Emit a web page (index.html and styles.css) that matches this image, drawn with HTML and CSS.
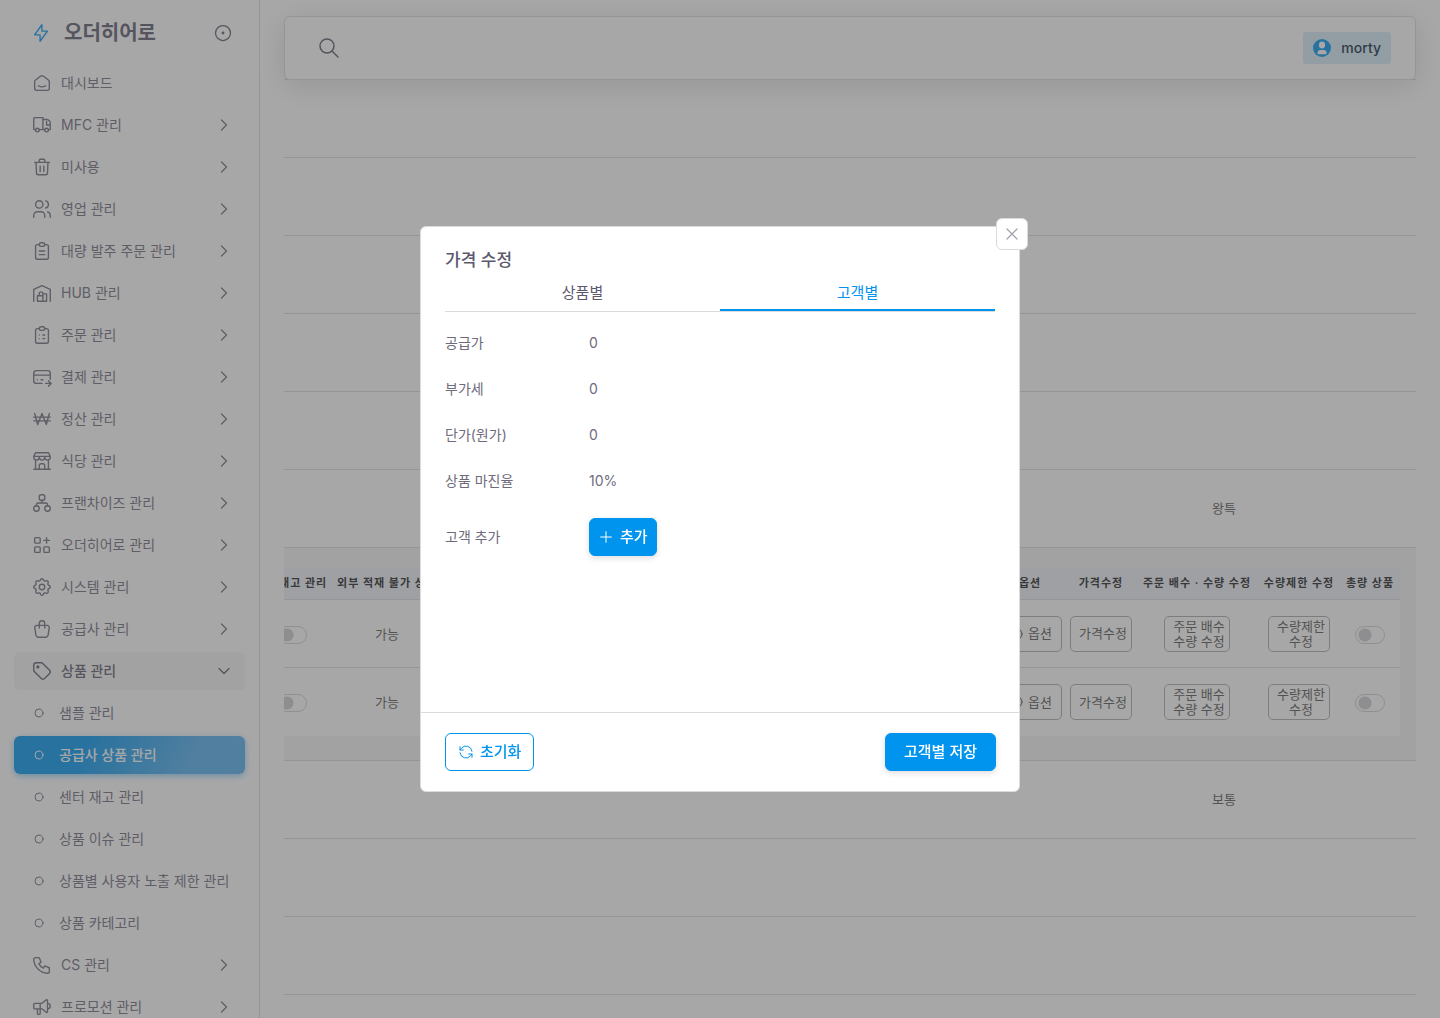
FILE: index.html
```html
<!DOCTYPE html>
<html lang="ko">
<head>
<meta charset="utf-8">
<meta name="viewport" content="width=device-width, initial-scale=1">
<title>오더히어로</title>
<link rel="stylesheet" href="styles.css">
</head>
<body>
<svg class="sprite" aria-hidden="true">
  <symbol id="chevron" viewBox="0 0 24 24"><path d="M9 6l6 6l-6 6"/></symbol>
  <symbol id="bullet" viewBox="0 0 10 10"><circle cx="5" cy="5" r="4"/></symbol>
</svg>
<div class="app">
  <aside class="sidebar">
    <div class="brand">
      <a class="brand-link" href="#">
        <svg class="icon brand-icon" viewBox="0 0 24 24"><path d="M13 3v7h6l-8 11v-7H5z"/></svg>
        <span class="brand-name">오더히어로</span>
      </a>
      <button class="plain" type="button" aria-label="메뉴 고정"><svg class="icon pin" viewBox="0 0 24 24"><circle cx="12" cy="12" r="9"/><circle cx="12" cy="12" r="1" class="fill"/></svg></button>
    </div>
    <nav>
      <ul class="nav">
        <li><a href="#"><svg class="icon" viewBox="0 0 24 24"><path d="M19 8.700l-5.300-4.100a2.700 2.700 0 0 0-3.400 0L5 8.700a2.600 2.600 0 0 0-1 2.100v7a2.200 2.200 0 0 0 2.200 2.200h11.600a2.200 2.200 0 0 0 2.200-2.200v-7c0-.800-.400-1.600-1-2.100M16 15c-2.200 1.300-5.800 1.300-8 0"/></svg><span>대시보드</span></a></li>
        <li><a href="#"><svg class="icon" viewBox="0 0 24 24"><circle cx="7" cy="17.500" r="2"/><circle cx="17" cy="17.500" r="2"/><path d="M5 17H3V5q0-1 1-1H13v13H9M13 6h4a4.500 4.500 0 0 1 4 4.500V17H19M13 17h2M21 12h-4V8"/></svg><span>MFC 관리</span><svg class="icon chev"><use href="#chevron"/></svg></a></li>
        <li><a href="#"><svg class="icon" viewBox="0 0 24 24"><path d="M4 7h16M10 11v6M14 11v6M5.500 7l.500 11.500a2 2 0 0 0 2 2h8a2 2 0 0 0 2-2L18.500 7M9 7V4.500a1 1 0 0 1 1-1h4a1 1 0 0 1 1 1V7"/></svg><span>미사용</span><svg class="icon chev"><use href="#chevron"/></svg></a></li>
        <li><a href="#"><svg class="icon" viewBox="0 0 24 24"><circle cx="9" cy="7" r="4"/><path d="M3 21v-2a4 4 0 0 1 4-4h4a4 4 0 0 1 4 4v2M16 3.130a4 4 0 0 1 0 7.750M21 21v-2a4 4 0 0 0-3-3.850"/></svg><span>영업 관리</span><svg class="icon chev"><use href="#chevron"/></svg></a></li>
        <li><a href="#"><svg class="icon" viewBox="0 0 24 24"><path d="M9 5H7a2 2 0 0 0-2 2v12a2 2 0 0 0 2 2h10a2 2 0 0 0 2-2V7a2 2 0 0 0-2-2h-2M9 12h6M9 16h6"/><rect x="9" y="3" width="6" height="4" rx="2"/></svg><span>대량 발주 주문 관리</span><svg class="icon chev"><use href="#chevron"/></svg></a></li>
        <li><a href="#"><svg class="icon" viewBox="0 0 24 24"><path d="M3 21V8l9-4l9 4v13M13 13h4v8H7v-6h6M13 21v-9a1 1 0 0 0-1-1h-2a1 1 0 0 0-1 1v3"/></svg><span>HUB 관리</span><svg class="icon chev"><use href="#chevron"/></svg></a></li>
        <li><a href="#"><svg class="icon" viewBox="0 0 24 24"><path d="M9 5H7a2 2 0 0 0-2 2v12a2 2 0 0 0 2 2h10a2 2 0 0 0 2-2V7a2 2 0 0 0-2-2h-2M9 12h.010M13 12h2M9 16h.010M13 16h2"/><rect x="9" y="3" width="6" height="4" rx="2"/></svg><span>주문 관리</span><svg class="icon chev"><use href="#chevron"/></svg></a></li>
        <li><a href="#"><svg class="icon" viewBox="0 0 24 24"><path d="M12 19H6a3 3 0 0 1-3-3V8a3 3 0 0 1 3-3h12a3 3 0 0 1 3 3v6.500M3 10h18M16 19h6M19 16l3 3l-3 3M7 15h.010M11 15h2"/></svg><span>결제 관리</span><svg class="icon chev"><use href="#chevron"/></svg></a></li>
        <li><a href="#"><svg class="icon" viewBox="0 0 24 24"><path d="M4 6l3.250 12L12 6l4.750 12L20 6M3 10h18M3 14h18"/></svg><span>정산 관리</span><svg class="icon chev"><use href="#chevron"/></svg></a></li>
        <li><a href="#"><svg class="icon" viewBox="0 0 24 24"><path d="M3 21h18M3 7v1a3 3 0 0 0 6 0V7m0 1a3 3 0 0 0 6 0V7m0 1a3 3 0 0 0 6 0V7H3l2-4h14l2 4M5 21V10.850M19 21V10.850M9 21v-4a2 2 0 0 1 2-2h2a2 2 0 0 1 2 2v4"/></svg><span>식당 관리</span><svg class="icon chev"><use href="#chevron"/></svg></a></li>
        <li><a href="#"><svg class="icon" viewBox="0 0 24 24"><rect x="9" y="3" width="6" height="6" rx="2"/><circle cx="6" cy="18" r="3"/><circle cx="18" cy="18" r="3"/><path d="M6 15v-1a2 2 0 0 1 2-2h8a2 2 0 0 1 2 2v1M12 9v3"/></svg><span>프랜차이즈 관리</span><svg class="icon chev"><use href="#chevron"/></svg></a></li>
        <li><a href="#"><svg class="icon" viewBox="0 0 24 24"><rect x="4" y="4" width="6" height="6" rx="1"/><rect x="4" y="14" width="6" height="6" rx="1"/><rect x="14" y="14" width="6" height="6" rx="1"/><path d="M14 7h6M17 4v6"/></svg><span>오더히어로 관리</span><svg class="icon chev"><use href="#chevron"/></svg></a></li>
        <li><a href="#"><svg class="icon" viewBox="0 0 24 24"><path d="M10.325 4.317c.426-1.756 2.924-1.756 3.350 0a1.724 1.724 0 0 0 2.573 1.066c1.543-.940 3.310.826 2.370 2.370a1.724 1.724 0 0 0 1.065 2.572c1.756.426 1.756 2.924 0 3.350a1.724 1.724 0 0 0-1.066 2.573c.940 1.543-.826 3.310-2.370 2.370a1.724 1.724 0 0 0-2.572 1.065c-.426 1.756-2.924 1.756-3.350 0a1.724 1.724 0 0 0-2.573-1.066c-1.543.940-3.310-.826-2.370-2.370a1.724 1.724 0 0 0-1.065-2.572c-1.756-.426-1.756-2.924 0-3.350a1.724 1.724 0 0 0 1.066-2.573c-.940-1.543.826-3.310 2.370-2.370c1 .608 2.296.070 2.572-1.065z"/><circle cx="12" cy="12" r="3"/></svg><span>시스템 관리</span><svg class="icon chev"><use href="#chevron"/></svg></a></li>
        <li><a href="#"><svg class="icon" viewBox="0 0 24 24"><path d="M6.300 8h11.400a2.300 2.300 0 0 1 2.200 2.600l-1.200 7.700a3 3 0 0 1-3 2.700H8.300a3 3 0 0 1-3-2.700l-1.200-7.700A2.300 2.300 0 0 1 6.300 8M9 11V6a3 3 0 0 1 6 0V11"/></svg><span>공급사 관리</span><svg class="icon chev"><use href="#chevron"/></svg></a></li>
        <li><a class="open" href="#"><svg class="icon" viewBox="0 0 24 24"><circle cx="7.500" cy="7.500" r="1" class="fill"/><path d="M3 6v5.172a2 2 0 0 0 .586 1.414l7.710 7.710a2.410 2.410 0 0 0 3.408 0l5.592-5.592a2.410 2.410 0 0 0 0-3.408l-7.710-7.710A2 2 0 0 0 11.172 3H6a3 3 0 0 0-3 3z"/></svg><span>상품 관리</span><svg class="icon chev down"><use href="#chevron"/></svg></a>
          <ul class="nav sub">
            <li><a href="#"><svg class="icon dot"><use href="#bullet"/></svg><span>샘플 관리</span></a></li>
            <li><a class="active" href="#" aria-current="page"><svg class="icon dot"><use href="#bullet"/></svg><span>공급사 상품 관리</span></a></li>
            <li><a href="#"><svg class="icon dot"><use href="#bullet"/></svg><span>센터 재고 관리</span></a></li>
            <li><a href="#"><svg class="icon dot"><use href="#bullet"/></svg><span>상품 이슈 관리</span></a></li>
            <li><a href="#"><svg class="icon dot"><use href="#bullet"/></svg><span>상품별 사용자 노출 제한 관리</span></a></li>
            <li><a href="#"><svg class="icon dot"><use href="#bullet"/></svg><span>상품 카테고리</span></a></li>
          </ul>
        </li>
        <li><a href="#"><svg class="icon" viewBox="0 0 24 24"><path d="M5 4h4l2 5l-2.500 1.500a11 11 0 0 0 5 5L15 13l5 2v4a2 2 0 0 1-2 2A16 16 0 0 1 3 6a2 2 0 0 1 2-2"/></svg><span>CS 관리</span><svg class="icon chev"><use href="#chevron"/></svg></a></li>
        <li><a href="#"><svg class="icon" viewBox="0 0 24 24"><path d="M18 8a3 3 0 0 1 0 6M10 8v11a1 1 0 0 1-1 1H8a1 1 0 0 1-1-1v-5M12 8l4.524-3.770A.900.900 0 0 1 18 4.922v12.156a.900.900 0 0 1-1.476.692L12 14H4a1 1 0 0 1-1-1V9a1 1 0 0 1 1-1h8"/></svg><span>프로모션 관리</span><svg class="icon chev"><use href="#chevron"/></svg></a></li>
      </ul>
    </nav>
  </aside>

  <main class="main">
    <header class="topbar">
      <button class="plain" type="button" aria-label="검색"><svg class="icon search" viewBox="0 0 24 24"><circle cx="10" cy="10" r="7"/><path d="M15 15l6 6"/></svg></button>
      <button class="user" type="button">
        <svg class="avatar" viewBox="0 0 18 18" aria-hidden="true"><circle class="disc" cx="9" cy="9" r="9"/><rect x="6" y="2.500" width="6" height="7" rx="3"/><path d="M4.500 15.300V14a3 3 0 0 1 3-3h3a3 3 0 0 1 3 3v1.300z"/></svg>
        <span>morty</span>
      </button>
    </header>
    <div class="grid-scroll">
      <table class="grid">
        <colgroup><col><col class="col-size"></colgroup>
        <tbody>
          <tr><td></td><td></td></tr>
          <tr><td></td><td></td></tr>
          <tr><td></td><td></td></tr>
          <tr><td></td><td></td></tr>
          <tr><td></td><td></td></tr>
          <tr><td></td><td>왕특</td></tr>
          <tr class="detail"><td colspan="2">
            <table class="options">
              <colgroup><col class="w-stock"><col class="w-load"><col><col class="w-option"><col class="w-price"><col class="w-order"><col class="w-limit"><col class="w-total"></colgroup>
              <thead>
                <tr><th>센터재고 관리</th><th>외부 적재 불가 상품</th><th></th><th>옵션</th><th>가격수정</th><th>주문 배수 · 수량 수정</th><th>수량제한 수정</th><th>총량 상품</th></tr>
              </thead>
              <tbody>
                <tr>
                  <td><input class="switch" type="checkbox" role="switch" aria-label="재고 관리"></td>
                  <td>가능</td><td></td>
                  <td><button class="cell-btn with-icon" type="button"><svg class="icon" viewBox="0 0 24 24"><circle cx="12" cy="12" r="9"/></svg>옵션</button></td>
                  <td><button class="cell-btn" type="button">가격수정</button></td>
                  <td><button class="cell-btn" type="button">주문 배수<br>수량 수정</button></td>
                  <td><button class="cell-btn" type="button">수량제한<br>수정</button></td>
                  <td><input class="switch" type="checkbox" role="switch" aria-label="총량 상품"></td>
                </tr>
                <tr>
                  <td><input class="switch" type="checkbox" role="switch" aria-label="재고 관리"></td>
                  <td>가능</td><td></td>
                  <td><button class="cell-btn with-icon" type="button"><svg class="icon" viewBox="0 0 24 24"><circle cx="12" cy="12" r="9"/></svg>옵션</button></td>
                  <td><button class="cell-btn" type="button">가격수정</button></td>
                  <td><button class="cell-btn" type="button">주문 배수<br>수량 수정</button></td>
                  <td><button class="cell-btn" type="button">수량제한<br>수정</button></td>
                  <td><input class="switch" type="checkbox" role="switch" aria-label="총량 상품"></td>
                </tr>
              </tbody>
            </table>
          </td></tr>
          <tr><td></td><td>보통</td></tr>
          <tr><td></td><td></td></tr>
          <tr><td></td><td></td></tr>
          <tr><td></td><td></td></tr>
        </tbody>
      </table>
    </div>
  </main>
</div>

<div class="backdrop">
  <section class="modal" role="dialog" aria-modal="true" aria-labelledby="modal-title">
    <button class="close" type="button" aria-label="닫기"><svg class="icon" viewBox="0 0 24 24"><path d="M18 6L6 18M6 6l12 12"/></svg></button>
    <div class="modal-body">
      <h2 id="modal-title">가격 수정</h2>
      <div class="tabs" role="tablist">
        <button type="button" role="tab" aria-selected="false">상품별</button>
        <button type="button" role="tab" aria-selected="true">고객별</button>
      </div>
      <dl class="fields">
        <dt>공급가</dt><dd>0</dd>
        <dt>부가세</dt><dd>0</dd>
        <dt>단가(원가)</dt><dd>0</dd>
        <dt>상품 마진율</dt><dd>10%</dd>
        <dt>고객 추가</dt><dd><button class="btn primary add" type="button"><svg class="icon" viewBox="0 0 24 24"><path d="M12 4v16M4 12h16"/></svg>추가</button></dd>
      </dl>
    </div>
    <footer class="modal-footer">
      <button class="btn outline" type="button"><svg class="icon" viewBox="0 0 24 24"><path d="M21 11A9 9 0 0 0 5 6.500L3 9M3 4v5h5M3 13A9 9 0 0 0 19 17.500l2-2.500M21 20v-5h-5"/></svg>초기화</button>
      <button class="btn primary" type="button">고객별 저장</button>
    </footer>
  </section>
</div>
</body>
</html>
```

FILE: styles.css
```css
:root {
  --primary: #0094ef;
  --text: #6f6b7d;
  --heading: #5d596c;
  --line: #dbdbdb;
}

* { box-sizing: border-box; }

body {
  margin: 0;
  background: #fff;
  color: var(--text);
  font: 14px/22px Inter, "Noto Sans CJK KR", sans-serif;
}

button { font: inherit; color: inherit; cursor: pointer; }
ul, dl, dd, h2 { margin: 0; padding: 0; }
ul { list-style: none; }
a { color: inherit; text-decoration: none; }

.sprite { display: none; }

.icon {
  flex: none;
  width: 22px;
  height: 22px;
  fill: none;
  stroke: currentColor;
  stroke-width: 1.5;
  stroke-linecap: round;
  stroke-linejoin: round;
}
.icon .fill { fill: currentColor; }

.plain { display: flex; padding: 0; border: 0; background: none; }

.app { display: flex; height: 100vh; overflow: hidden; }

/* Sidebar */
.sidebar {
  flex: none;
  width: 260px;
  border-right: 1px solid var(--line);
  overflow: hidden;
}
.brand {
  display: flex;
  align-items: center;
  justify-content: space-between;
  height: 64px;
  padding: 1px 26px 0 30px;
  color: var(--heading);
}
.brand-link { display: flex; align-items: center; gap: 12px; }
.brand-icon { color: var(--primary); }
.brand-name { font-size: 20px; font-weight: 700; }
.pin { width: 20px; height: 20px; }

.nav { display: flex; flex-direction: column; gap: 4px; }
nav > .nav { padding: 0 14px; }
.nav a {
  display: flex;
  align-items: center;
  gap: 8px;
  height: 38px;
  padding: 0 11px 0 17px;
  border-radius: 6px;
  white-space: nowrap;
}
.nav .chev { width: 20px; height: 20px; margin-left: auto; }
.nav .down { transform: rotate(90deg); }
.nav .open { background: #f5f5f5; color: var(--heading); font-weight: 500; }
.sub { padding-top: 4px; }
.sub a { gap: 15px; padding-left: 20px; }
.nav .dot { width: 10px; height: 10px; stroke-width: 1; }
.nav .active {
  background: linear-gradient(118deg, var(--primary) 30%, #50aeee 75%);
  box-shadow: 0 2px 6px rgba(0, 148, 239, .48);
  color: #fff;
  font-weight: 500;
}

/* Main column */
.main {
  flex: 1;
  min-width: 0;
  padding: 16px 24px 0;
}
.topbar {
  position: relative;
  display: flex;
  align-items: center;
  justify-content: space-between;
  height: 64px;
  padding: 0 24px 0 32px;
  border: 1px solid var(--line);
  border-radius: 6px;
  background: #fff;
  box-shadow: 0 6px 28px rgba(0, 0, 0, .14);
}
.search { color: var(--heading); }
.topbar .search { width: 24px; height: 24px; }
.user {
  display: flex;
  align-items: center;
  gap: 10px;
  height: 32px;
  padding: 0 10px;
  border: 0;
  border-radius: 3px;
  background: #d7edf9;
  color: #0a2838;
  font-weight: 500;
}
.avatar { width: 18px; height: 18px; fill: #fff; }
.avatar .disc { fill: var(--primary); }

.grid-scroll {
  display: flex;
  justify-content: flex-end;
  margin-top: -1px;
  border-top: 1px solid var(--line);
  overflow: hidden;
}
table { border-collapse: separate; border-spacing: 0; table-layout: fixed; }
.grid {
  flex: none;
  width: calc(100% + 47px);
  color: #555;
  font-size: 13px;
  text-align: center;
}
.col-size { width: 384px; }
.grid > tbody > tr > td {
  height: 78px;
  padding: 0 0 2px;
  border-bottom: 1px solid var(--line);
}
.grid > tbody > .detail > td {
  height: auto;
  padding: 20px 16px 24px;
  background: #f5f5f5;
}

.options { width: 100%; background: #fff; }
.options th {
  height: 32px;
  padding: 0 0 2px;
  border-bottom: 1px solid var(--line);
  background: #edf1f9;
  color: #222;
  font-size: 11px;
  font-weight: 700;
  letter-spacing: 1px;
  line-height: 16px;
  white-space: nowrap;
}
.options td { height: 68px; padding: 0; border-bottom: 1px solid var(--line); }
.options tr:last-child td { border-bottom: 0; }
.w-stock { width: 78px; }
.w-load { width: 112px; }
.w-option { width: 72px; }
.w-price { width: 70px; }
.w-order { width: 122px; }
.w-limit { width: 82px; }
.w-total { width: 60px; }

.cell-btn {
  min-height: 36px;
  padding: 2px 4px 2px 8px;
  border: 1px solid #aaa;
  border-radius: 5px;
  background: none;
  font-size: 13px;
  line-height: 15px;
  white-space: nowrap;
  vertical-align: middle;
}
.with-icon { display: inline-flex; align-items: center; gap: 4px; padding: 0 9px; }
.with-icon .icon { width: 16px; height: 16px; }

.switch {
  appearance: none;
  display: inline-block;
  width: 30px;
  height: 18px;
  margin: 0;
  border: 1px solid #d0d0d2;
  border-radius: 9px;
  background: radial-gradient(circle at 9px 8px, #ccccd0 6px, transparent 7px);
  vertical-align: middle;
}

/* Dialog */
.backdrop {
  position: fixed;
  inset: 0;
  display: grid;
  place-items: center;
  background: rgba(80, 80, 80, .5);
}
.modal {
  position: relative;
  display: flex;
  flex-direction: column;
  width: 600px;
  max-width: 100%;
  min-height: 566px;
  border: 1px solid var(--line);
  border-radius: 6px;
  background: #fff;
}
.close {
  position: absolute;
  top: -9px;
  right: -9px;
  display: grid;
  place-items: center;
  width: 32px;
  height: 32px;
  padding: 0;
  border: 1px solid var(--line);
  border-radius: 6px;
  background: #fff;
  color: #a5a2ad;
}
.close .icon { width: 20px; height: 20px; }
.modal-body { flex: 1; padding: 20px 24px; }
.modal h2 {
  color: var(--heading);
  font-size: 17px;
  font-weight: 500;
  line-height: 26px;
}
.tabs { display: flex; border-bottom: 1px solid var(--line); }
.tabs button {
  flex: 1;
  height: 38px;
  padding: 4px 0 0;
  border: 0;
  border-bottom: 2px solid transparent;
  background: none;
  color: var(--heading);
  font-size: 15px;
}
.tabs [aria-selected="true"] { border-color: var(--primary); color: var(--primary); }

.fields {
  display: grid;
  grid-template-columns: 120px 1fr;
  gap: 24px;
  align-items: center;
  padding-top: 20px;
}

.btn {
  display: inline-flex;
  align-items: center;
  justify-content: center;
  gap: 6px;
  height: 38px;
  padding: 0 18px;
  border: 1px solid var(--primary);
  border-radius: 6px;
  font-size: 15px;
  font-weight: 500;
}
.btn .icon { width: 16px; height: 16px; }
.primary { background: var(--primary); color: #fff; box-shadow: 0 2px 6px rgba(0, 0, 0, .14); }
.outline { padding: 0 12px; background: #fff; color: var(--primary); }
.add { margin: 2px 0; padding: 0 8px; }
.modal-footer {
  display: flex;
  justify-content: space-between;
  padding: 20px 23px 20px 24px;
  border-top: 1px solid var(--line);
}
```
